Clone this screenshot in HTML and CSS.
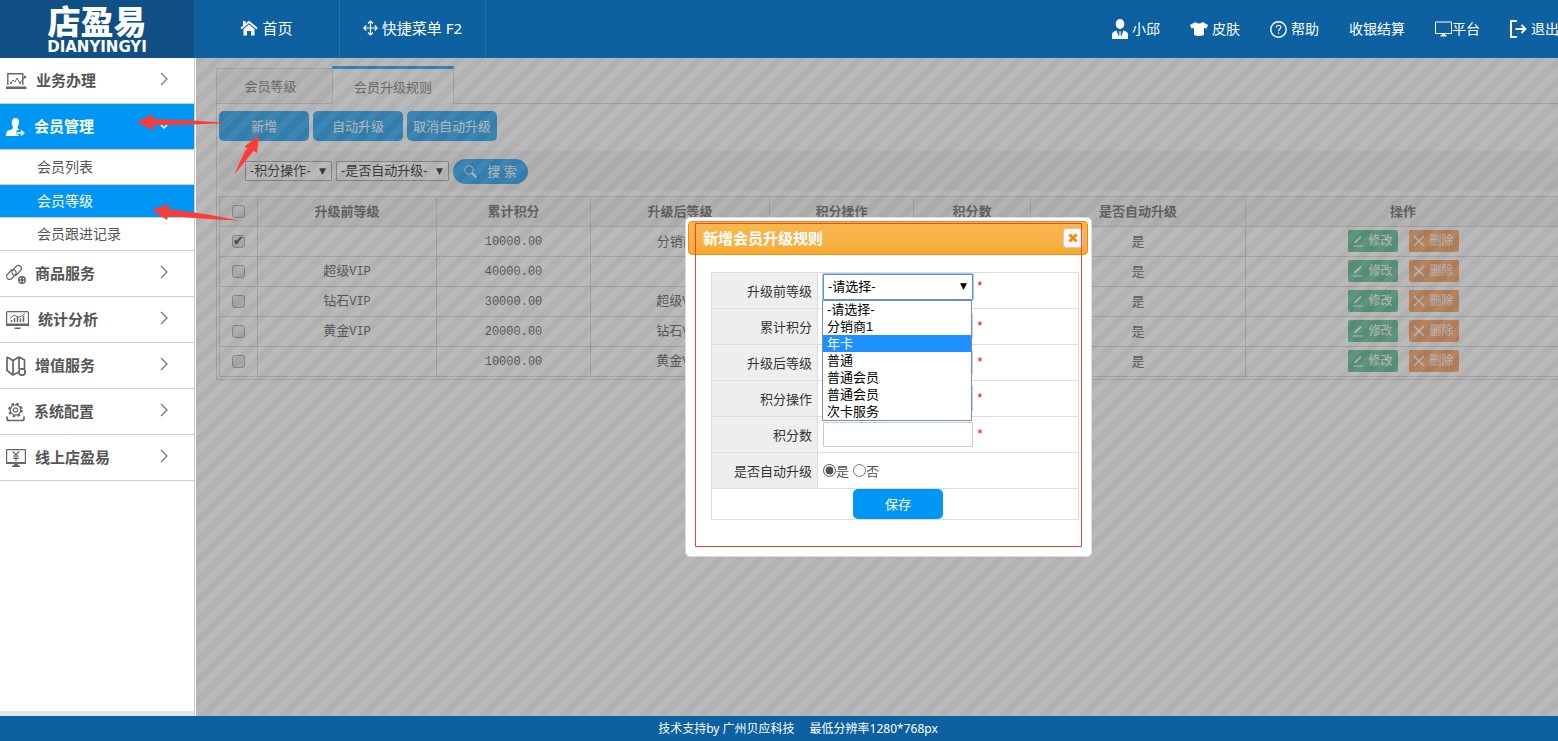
FILE: index.html
```html
<!DOCTYPE html>
<html lang="zh-CN">
<head>
<meta charset="utf-8">
<title>店盈易 - 会员升级规则</title>
<link rel="stylesheet" href="styles.css">
</head>
<body>
<svg class="defs" aria-hidden="true">
  <symbol id="i-edit" viewBox="0 0 12 12"><path d="M1 11h10" stroke="currentColor" fill="none"/><path d="M2 8.500l.6-2L8.500 1l1.300 1.200L4 7.800z" fill="currentColor"/></symbol>
  <symbol id="i-del" viewBox="0 0 12 12"><path d="M1 1l10 10M11 1L1 11" stroke="currentColor" stroke-width="1.500" fill="none"/></symbol>
  <symbol id="i-chev" viewBox="0 0 8 14"><path d="M1 1l6 6-6 6" stroke="currentColor" stroke-width="1.300" fill="none"/></symbol>
</svg>
<div class="app">
  <header class="topbar">
    <a class="logo" href="#"><span class="logo-cn">店盈易</span><span class="logo-en">DIANYINGYI</span></a>
    <nav class="nav-left">
      <a class="nav-cell" href="#">
        <svg width="18" height="16" viewBox="0 0 18 16"><path d="M1 8.500L9 2l8 6.500" stroke="#fff" stroke-width="1.800" fill="none"/><path d="M3 1h2.500v4L3 7z" fill="#fff"/><path d="M3.500 9L9 4.500 14.500 9v6.500H11V11H7v4.500H3.500z" fill="#fff"/></svg>
        首页</a>
      <a class="nav-cell" href="#">
        <svg width="15" height="16" viewBox="0 0 15 16"><path d="M7.500 1v14M.8 8h13.400M5 3.500L7.500 1 10 3.500M5 12.500L7.500 15l2.500-2.500M3.300 5.500L.8 8l2.500 2.500M11.700 5.500L14.200 8l-2.500 2.500" stroke="#fff" stroke-width="1.200" fill="none"/></svg>
        快捷菜单 F2</a>
    </nav>
    <nav class="nav-right">
      <a href="#"><svg width="16" height="20" viewBox="0 0 16 20"><ellipse cx="8" cy="5" rx="4.300" ry="5" fill="#fff"/><path d="M0 20v-4.500c0-2 1.500-3 4.500-4L7 18l.5-4-.7-1.500h2.400L8.500 14l.5 4 2.500-6.500c3 1 4.500 2 4.500 4V20z" fill="#fff"/></svg>小邱</a>
      <a href="#"><svg width="18" height="14" viewBox="0 0 18 14"><path d="M5.500 0Q9 3 12.500 0L18 3l-1.500 3.500-2.500-.6V13q-5 2-10 0V5.900l-2.500.6L0 3z" fill="#fff"/></svg>皮肤</a>
      <a href="#"><svg width="17" height="17" viewBox="0 0 17 17"><circle cx="8.500" cy="8.500" r="7.700" stroke="#fff" stroke-width="1.400" fill="none"/><path d="M6.300 6.600c0-3 4.500-3 4.500-.3 0 1.700-2.200 1.800-2.200 3.900M8.600 11.500V13" stroke="#fff" stroke-width="1.100" fill="none"/></svg>帮助</a>
      <a href="#">收银结算</a>
      <a class="tight" href="#"><svg width="17" height="16" viewBox="0 0 17 16"><path d="M.5 1h16v11.500H.5z" stroke="#fff" fill="none"/><path d="M7 12.500h3V14h1.500v1.500h-6V14H7z" fill="#fff"/></svg>平台</a>
      <a href="#"><svg width="17" height="18" viewBox="0 0 17 18"><path d="M7 1H1v16h6" stroke="#fff" stroke-width="2" fill="none"/><path d="M5.500 9H15M11.500 5l4 4-4 4" stroke="#fff" stroke-width="1.800" fill="none"/></svg>退出</a>
    </nav>
  </header>

  <div class="body">
    <aside class="sidebar">
      <a class="menu" href="#"><svg width="21" height="16" viewBox="0 0 21 16"><path d="M1.800 12V.7h15V12" stroke="#666" stroke-width="1.400" fill="none"/><path d="M0 14h20v2H0zM4 11l3-4 2 2 2-4 3 5 5-6" stroke="#666" fill="none"/><path d="M0 14h20v2H0z" fill="#666"/><circle cx="19" cy="4" r="1.300" fill="#666"/><circle cx="14" cy="10" r="1" fill="#666"/><circle cx="5" cy="10" r="1" fill="#666"/></svg><span>业务办理</span><svg class="chev" width="8" height="14"><use href="#i-chev"/></svg></a>
      <a class="menu active" href="#"><svg width="19" height="20" viewBox="0 0 19 20"><path d="M9.500 1C12 1 13.500 3 13 6c-.3 2-1.300 3.400-1.500 4.500 0 1 .8 1.500 2 2l-3 1v4h2V19H0c0-4 1-5.200 3-5.800 2.500-.7 4-1.200 4-2.700C6.500 9 6 8 5.800 6 5.500 3 7 1 9.500 1z" fill="#fff"/><path d="M11 16h6M15 13.500l2.700 2.500-2.700 2.500" stroke="#fff" stroke-width="1.600" fill="none"/></svg><span>会员管理</span><svg class="chev-down" width="8" height="6" viewBox="0 0 8 6"><path d="M1 1l3 3 3-3" stroke="#fff" stroke-width="1.500" fill="none"/></svg></a>
      <ul class="submenu">
        <li><a href="#">会员列表</a></li>
        <li><a class="active" href="#">会员等级</a></li>
        <li><a href="#">会员跟进记录</a></li>
      </ul>
      <a class="menu" href="#"><svg width="20" height="20" viewBox="0 0 20 20"><g stroke="#666" stroke-width="1.200" fill="none"><rect x="0" y="8" width="11" height="6" rx="3" transform="rotate(-48 5 11)"/><rect x="5" y="3" width="11" height="6" rx="3" transform="rotate(-48 11 6)"/></g><circle cx="16" cy="16" r="3.300" stroke="#666" stroke-width="1.400" fill="#fff"/><path d="M16 13v6M13 16h6" stroke="#666" stroke-width="1.700"/></svg><span>商品服务</span><svg class="chev" width="8" height="14"><use href="#i-chev"/></svg></a>
      <a class="menu" href="#"><svg width="23" height="18" viewBox="0 0 23 18"><rect x=".6" y=".6" width="21.800" height="13.800" rx="1" stroke="#666" stroke-width="1.200" fill="none"/><path d="M0 12.500h23V15H0zM8.500 16.500h6V18h-6z" fill="#666"/><path d="M5.500 11V9M8.500 11V7M11.500 11V6M14.500 11V7.500M17.500 11V5" stroke="#666" stroke-width="1.500"/><path d="M4 7.500L8 4l3 1.500L14 6l5-3.500" stroke="#666" fill="none"/></svg><span>统计分析</span><svg class="chev" width="8" height="14"><use href="#i-chev"/></svg></a>
      <a class="menu" href="#"><svg width="20" height="20" viewBox="0 0 20 20"><path d="M1 1l6 3.500L13 1l5.500 3v9M1 1v13.500L7 19l5-2.500M7 4.500V19M13 1v12" stroke="#666" stroke-width="1.700" fill="none"/><circle cx="16" cy="16" r="3.200" stroke="#666" stroke-width="1.600" fill="#fff"/><path d="M16 12v2M16 18v2M12 16h2M18 16h2" stroke="#666" stroke-width="1.500"/></svg><span>增值服务</span><svg class="chev" width="8" height="14"><use href="#i-chev"/></svg></a>
      <a class="menu" href="#"><svg width="19" height="20" viewBox="0 0 19 20"><circle cx="9.500" cy="8" r="6.300" stroke="#666" stroke-width="2" stroke-dasharray="2.600 2.350" fill="none"/><circle cx="9.500" cy="8" r="5.200" stroke="#666" stroke-width="1.200" fill="#fff"/><circle cx="9.500" cy="8" r="2.200" stroke="#666" stroke-width="1.200" fill="none"/><path d="M1 14.500v2q0 2 2 2h13q2 0 2-2v-2" stroke="#666" stroke-width="1.700" fill="none"/></svg><span>系统配置</span><svg class="chev" width="8" height="14"><use href="#i-chev"/></svg></a>
      <a class="menu" href="#"><svg width="20" height="18" viewBox="0 0 20 18"><path d="M.6.6h18.800v13.800H.6z" stroke="#666" stroke-width="1.200" fill="none"/><path d="M0 13h20v2H0zM8 15h4v1.500h2V18H6v-1.500h2z" fill="#666"/><path d="M7 2.500l3 3.500 3-3.500M10 6v6M7 7h6M7 9.300h6" stroke="#666" stroke-width="1.200" fill="none"/></svg><span>线上店盈易</span><svg class="chev" width="8" height="14"><use href="#i-chev"/></svg></a>
      <div class="sidebar-end"></div>
    </aside>

    <main class="content">
      <div class="tabs">
        <a class="tab" href="#">会员等级</a>
        <a class="tab current" href="#">会员升级规则</a>
      </div>
      <section class="panel">
        <div class="toolbar">
          <button type="button" class="btn">新增</button>
          <button type="button" class="btn">自动升级</button>
          <button type="button" class="btn">取消自动升级</button>
        </div>
        <form class="filter">
          <span class="drop"><select aria-label="积分操作"><option>-积分操作-</option></select></span>
          <span class="drop wide"><select aria-label="是否自动升级"><option>-是否自动升级-</option></select></span>
          <button type="button" class="search"><svg width="13" height="13" viewBox="0 0 13 13"><circle cx="5" cy="5" r="4.200" stroke="#fff" fill="none"/><path d="M8 8l4.500 4.500" stroke="#fff" stroke-width="1.800"/></svg>搜 索</button>
        </form>
        <table class="grid">
          <colgroup><col class="c-check"><col class="c-before"><col class="c-total"><col class="c-after"><col class="c-op"><col class="c-points"><col class="c-auto"><col></colgroup>
          <thead>
            <tr><th><input type="checkbox" aria-label="全选"></th><th>升级前等级</th><th>累计积分</th><th>升级后等级</th><th>积分操作</th><th>积分数</th><th>是否自动升级</th><th>操作</th></tr>
          </thead>
          <tbody>
            <tr><td><input type="checkbox" aria-label="选择" checked></td><td></td><td><span class="mono">10000.00</span></td><td>分销商1</td><td></td><td></td><td>是</td><td><div class="acts"><button type="button" class="act edit"><svg width="12" height="12"><use href="#i-edit"/></svg>修改</button><button type="button" class="act del"><svg width="12" height="12"><use href="#i-del"/></svg>删除</button></div></td></tr>
            <tr><td><input type="checkbox" aria-label="选择"></td><td>超级<span class="mono">VIP</span></td><td><span class="mono">40000.00</span></td><td></td><td></td><td></td><td>是</td><td><div class="acts"><button type="button" class="act edit"><svg width="12" height="12"><use href="#i-edit"/></svg>修改</button><button type="button" class="act del"><svg width="12" height="12"><use href="#i-del"/></svg>删除</button></div></td></tr>
            <tr><td><input type="checkbox" aria-label="选择"></td><td>钻石<span class="mono">VIP</span></td><td><span class="mono">30000.00</span></td><td>超级<span class="mono">VIP</span></td><td></td><td></td><td>是</td><td><div class="acts"><button type="button" class="act edit"><svg width="12" height="12"><use href="#i-edit"/></svg>修改</button><button type="button" class="act del"><svg width="12" height="12"><use href="#i-del"/></svg>删除</button></div></td></tr>
            <tr><td><input type="checkbox" aria-label="选择"></td><td>黄金<span class="mono">VIP</span></td><td><span class="mono">20000.00</span></td><td>钻石<span class="mono">VIP</span></td><td></td><td></td><td>是</td><td><div class="acts"><button type="button" class="act edit"><svg width="12" height="12"><use href="#i-edit"/></svg>修改</button><button type="button" class="act del"><svg width="12" height="12"><use href="#i-del"/></svg>删除</button></div></td></tr>
            <tr><td><input type="checkbox" aria-label="选择"></td><td></td><td><span class="mono">10000.00</span></td><td>黄金<span class="mono">VIP</span></td><td></td><td></td><td>是</td><td><div class="acts"><button type="button" class="act edit"><svg width="12" height="12"><use href="#i-edit"/></svg>修改</button><button type="button" class="act del"><svg width="12" height="12"><use href="#i-del"/></svg>删除</button></div></td></tr>
          </tbody>
        </table>
      </section>
      <div class="overlay"></div>
    </main>
  </div>

  <footer class="footer"><span>技术支持by 广州贝应科技</span><span>最低分辨率1280*768px</span></footer>
</div>

<div class="dialog" role="dialog" aria-labelledby="dlg-title">
  <div class="dialog-title">
    <h2 id="dlg-title">新增会员升级规则</h2>
    <button type="button" class="close" aria-label="关闭"><svg width="10" height="10" viewBox="0 0 10 10"><path d="M1.500 1.500l7 7M8.500 1.500l-7 7" stroke="#ef8c08" stroke-width="3"/></svg></button>
  </div>
  <form class="dialog-body">
    <table class="form">
      <tr class="first"><th><label for="f-before">升级前等级</label></th><td>
        <div class="field">
          <span class="drop big"><select id="f-before"><option>-请选择-</option></select></span><em>*</em>
          <ul class="options" role="listbox">
            <li role="option">-请选择-</li><li role="option">分销商1</li><li role="option" class="hot">年卡</li><li role="option">普通</li><li role="option">普通会员</li><li role="option">普通会员</li><li role="option">次卡服务</li>
          </ul>
        </div></td></tr>
      <tr><th><label for="f-total">累计积分</label></th><td><div class="field"><input class="text" id="f-total" type="text"><em>*</em></div></td></tr>
      <tr><th><label for="f-after">升级后等级</label></th><td><div class="field"><input class="text" id="f-after" type="text"><em>*</em></div></td></tr>
      <tr><th><label for="f-op">积分操作</label></th><td><div class="field"><input class="text" id="f-op" type="text"><em>*</em></div></td></tr>
      <tr><th><label for="f-points">积分数</label></th><td><div class="field"><input class="text" id="f-points" type="text"><em>*</em></div></td></tr>
      <tr><th>是否自动升级</th><td><div class="radios"><label><input type="radio" name="auto" checked>是</label><label><input type="radio" name="auto">否</label></div></td></tr>
      <tr class="last"><td colspan="2"><button type="button" class="btn save">保存</button></td></tr>
    </table>
  </form>
</div>

<svg class="marks" width="1100" height="560" viewBox="0 0 1100 560" aria-hidden="true">
  <g fill="#ff3b38">
    <path d="M137 122l16.500-8-.5 5 40 1.500 36 2.500-36 1.500-40 .5.500 5.500z"/>
    <path d="M259 135.500l-2 17.500-3.300-2.300L234 175l11-24 2.500-2.500-3-2z"/>
    <path d="M152 210l17-6-1 5 40 5.500 31 6-31-1.500-40-3-1 4z"/>
  </g>
  <path d="M695.500 223.500h386v323h-386z" fill="none" stroke="#ff3b38"/>
</svg>
</body>
</html>
```

FILE: styles.css
```css
* { box-sizing: border-box; }
body {
  margin: 0;
  overflow: hidden;
  font: 13px/18px "Noto Sans", "Noto Sans CJK SC", sans-serif;
  color: #444;
  background: #fff;
}
a { color: inherit; text-decoration: none; }
button, select, input { font: inherit; margin: 0; }
svg { flex: none; }
.defs { position: absolute; width: 0; height: 0; }
.app { display: flex; flex-direction: column; height: 100vh; }

/* top bar */
.topbar { display: flex; flex: none; height: 58px; background: #0d61a1; color: #fff; }
.logo {
  display: flex; flex-direction: column; align-items: center; gap: 4px;
  flex: none; width: 194px; padding-top: 4px; background: #105085;
}
.logo-cn { font: 900 33px/33px "Noto Sans CJK SC", sans-serif; }
.logo-en { font: 700 15px/12px "DejaVu Sans", sans-serif; }
.nav-left { display: flex; font-size: 15px; }
.nav-cell {
  display: flex; align-items: center; justify-content: center; gap: 4px;
  width: 146px; padding-bottom: 3px; border-right: 1px solid #2371ad;
}
.nav-right { display: flex; flex: 1; align-items: center; justify-content: flex-end; gap: 30px; margin-right: -1px; font-size: 14px; white-space: nowrap; }
.nav-right a { display: flex; align-items: center; gap: 4px; }
.nav-right .tight { gap: 0; }

/* side menu */
.body { display: flex; flex: 1; min-height: 0; }
.sidebar {
  display: flex; flex-direction: column; flex: none; width: 196px; padding-right: 1px;
  border-right: 1px solid #fff; box-shadow: inset -1px 0 #ccc; color: #555;
}
.menu {
  display: flex; align-items: center; gap: 9px;
  flex: none; height: 46px; padding: 0 26px 0 6px;
  border-bottom: 1px solid #ccc; font-size: 15px; font-weight: 700;
}
.menu span { flex: 1; padding-bottom: 2px; }
.menu.active, .submenu .active { background: #0096f3; color: #fff; }
.chev { color: #777; margin-bottom: 4px; }
.submenu { margin: 0; padding: 0; list-style: none; font-size: 14px; border-bottom: 1px solid #ccc; }
.submenu a { display: flex; align-items: center; height: 33px; padding-left: 37px; }
.submenu li:first-child a { height: 35px; border-bottom: 1px solid #ccc; }
.submenu .active { border-bottom: 1px solid #ccc; }
.submenu li:last-child a { height: 32px; }
.sidebar-end { height: 5px; margin-top: auto; background: #e4e4e4; }

/* content */
.content { position: relative; flex: 1; min-width: 0; overflow: hidden; padding: 8px 0 0 20px; }
.overlay {
  position: absolute; inset: 0;
  background: linear-gradient(135deg, rgba(100,100,100,.5) 25%, rgba(116,116,116,.5) 25% 50%, rgba(100,100,100,.5) 50% 75%, rgba(116,116,116,.5) 75%);
  background-size: 20px 20px;
}
.tabs { display: flex; align-items: flex-end; border-bottom: 1px solid #d2d2d2; margin-right: -8px; }
.tab {
  display: flex; align-items: center; justify-content: center; width: 116px; height: 35px; padding-right: 8px;
  border: 1px solid #d2d2d2; border-width: 1px 0 0 1px; background: #f6f6f6; color: #666;
}
.tab.current { width: 122px; height: 38px; margin-bottom: -1px; padding: 0; border-width: 3px 1px 0 1px; border-top-color: #0096f3; background: #fff; }
.panel { margin-right: -6px; padding: 7px 2px 2px; border: 1px solid #d2d2d2; border-top: 0; }
.toolbar { display: flex; gap: 4px; }
.btn { width: 90px; height: 30px; padding: 0; border: 0; border-radius: 5px; background: #0096f3; color: #fff; }
.filter { display: flex; align-items: center; gap: 4px; height: 40px; margin: 10px 0 5px; padding-left: 26px; background: #f2f2f2; }
.drop { position: relative; width: 87px; height: 20px; font: 13px/18px "Liberation Sans", "Noto Sans CJK SC", sans-serif; color: #000; }
.drop.wide { width: 113px; }
.drop select { appearance: none; display: block; width: 100%; height: 100%; padding: 0 4px; border: 1px solid #999; border-radius: 1px; background: #fff; color: inherit; }
.drop::after { content: "▼"; position: absolute; right: 6px; top: 0; font: 9px/20px "DejaVu Sans", sans-serif; pointer-events: none; }
.search { display: flex; align-items: center; justify-content: center; gap: 10px; width: 75px; height: 25px; padding: 0; border: 0; border-radius: 13px; background: #0096f3; color: #fff; }

.grid { width: 100%; table-layout: fixed; border-collapse: collapse; text-align: center; }
.grid th, .grid td { height: 30px; padding: 0 0 2px; border: 1px solid #d2d2d2; }
.grid th:first-child, .grid td:first-child { padding: 0; }
.grid th { background: #f2f2f2; color: #555; }
.grid input { display: block; margin: 0 auto; }
.grid input, .radios input { width: 13px; height: 13px; }
.grid input {
  appearance: none; border: 1px solid #999; border-radius: 3px; background: linear-gradient(#eee, #d8d8d8);
}
.grid input:checked::after { content: "✔"; display: block; font: 13px/10px "DejaVu Sans", sans-serif; color: #222; }
.c-check { width: 38px; } .c-before { width: 179px; } .c-total { width: 154px; } .c-after { width: 179px; }
.c-op { width: 144px; } .c-points { width: 117px; } .c-auto { width: 215px; }
.mono { font: 12px/18px "Liberation Mono", monospace; }
.acts { display: flex; justify-content: center; gap: 11px; }
.act { display: flex; align-items: center; justify-content: center; gap: 4px; width: 50px; height: 22px; padding: 0; border: 0; border-radius: 2px; color: #fff; font-size: 12px; }
.edit { background: #44b784; }
.del { background: #f8924a; }

.footer { display: flex; flex: none; align-items: center; justify-content: center; gap: 15px; height: 25px; padding-left: 38px; background: #0d61a1; color: #fff; font-size: 12px; }

/* dialog */
.dialog { position: absolute; left: 685px; top: 217px; width: 407px; padding: 3px 3px 3px 2px; border: 1px solid #ddd; border-radius: 5px; background: #fff; }
.dialog-title {
  display: flex; align-items: center; justify-content: space-between; height: 34px; padding: 0 4px 0 14px;
  border: 1px solid #e78f08; border-radius: 4px; background: linear-gradient(#f9b74c, #f8b34a 50%, #f6aa30);
}
.dialog-title h2 { margin: 0; font-size: 15px; color: #fff; }
.close { display: flex; align-items: center; justify-content: center; width: 20px; height: 20px; padding: 0; border: 1px solid #ccc; border-radius: 4px; background: #f8f8f8; }
.dialog-body { padding: 17px 9px 33px 23px; }
.form { width: 100%; border-collapse: collapse; }
.form th, .form td { height: 36px; padding: 0 5px; border: 1px solid #ddd; text-align: left; }
.form th { width: 106px; background: #eee; color: #333; font-weight: 400; text-align: right; }
.form .first td { padding-top: 1px; vertical-align: top; }
.form .last td { height: 31px; padding: 0 0 0 6px; }
.save { display: block; margin: 0 auto; }
.field { position: relative; display: flex; align-items: center; gap: 3px; }
.field em { color: #f00; font: 13px/18px "Liberation Mono", monospace; }
.text { width: 150px; height: 25px; padding: 0 4px; border: 1px solid #ccc; background: #fff; }
.drop.big { width: 150px; height: 26px; }
.drop.big select { border-color: #5b8fe0; box-shadow: 0 0 0 1px #a9c6f3; }
.drop.big::after { line-height: 24px; }
.options {
  position: absolute; left: -1px; top: 26px; z-index: 1; width: 150px; margin: 0; padding: 0; list-style: none;
  border: 1px solid #6f90cc; background: #fff; color: #000; font: 13px/17px "Liberation Sans", "Noto Sans CJK SC", sans-serif;
}
.options li { height: 17px; padding-left: 4px; }
.options .hot { background: #1e90ff; color: #fff; }
.radios { display: flex; gap: 4px; color: #555; }
.radios label { display: flex; align-items: center; }
.radios input { accent-color: #555; }

.marks { position: absolute; left: 0; top: 0; pointer-events: none; }
```
